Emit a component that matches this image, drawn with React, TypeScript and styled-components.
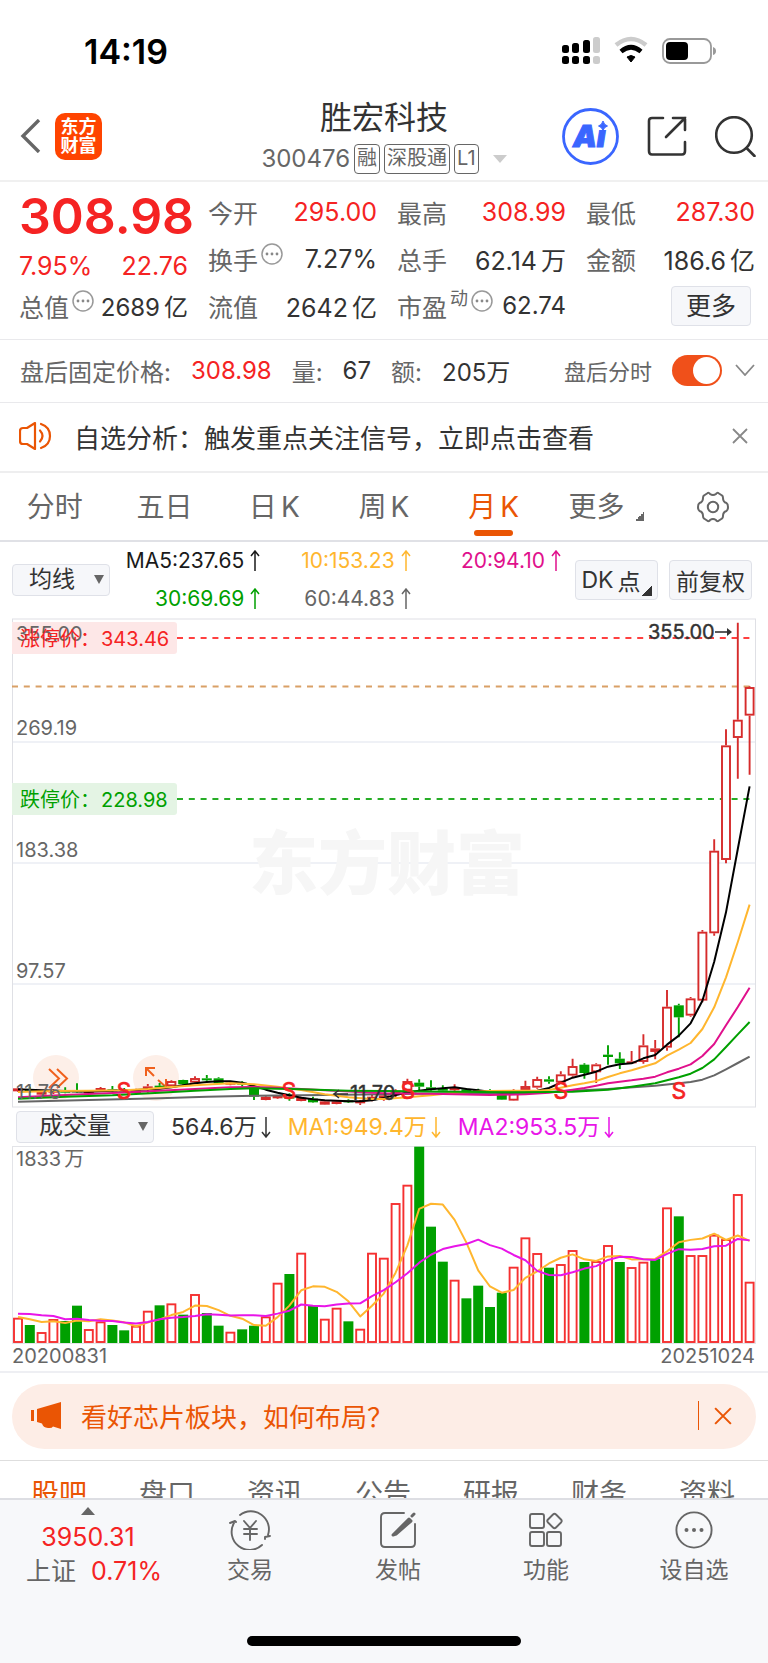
import React from "react";
import styled, { createGlobalStyle } from "styled-components";

const color = {
  ink: "#333333",
  grey: "#666666",
  rise: "#f52323",
  fall: "#00a000",
  accent: "#ea5504",
  amber: "#ffb62e",
  pink: "#e0108c",
  magenta: "#e815e8",
  line: "#e9e9ec",
  panel: "#f6f7fa",
};

const GlobalStyle = createGlobalStyle`
  * { box-sizing: border-box; }
  body { margin: 0; background: #fff; }
  body, button, select, input {
    font-family: Inter, "Noto Sans CJK SC", sans-serif;
    font-weight: 400;
    color: ${color.ink};
  }
  button { border: 0; padding: 0; background: none; cursor: pointer; }
  svg { display: block; flex: none; }
`;

/* ---------- page frame ---------- */

const Screen = styled.div`
  display: flex;
  flex-direction: column;
  min-height: 100vh;
  overflow: hidden;
`;

const StatusBar = styled.div`
  display: flex;
  justify-content: space-between;
  align-items: center;
  height: 92px;
  padding: 10px 52px 0 84px;
  font-size: 34px;
  font-weight: 600;
  color: #000;
`;

const Header = styled.header`
  display: grid;
  grid-template-columns: 1fr auto 1fr;
  align-items: center;
  height: 90px;
  padding: 0 12px;
  border-bottom: 2px solid #f0f0f0;
`;

const HeaderSide = styled.div<{ $end?: boolean }>`
  display: flex;
  align-items: center;
  justify-content: ${(p) => (p.$end ? "flex-end" : "flex-start")};
  gap: ${(p) => (p.$end ? 28 : 14)}px;
  padding-left: ${(p) => (p.$end ? 0 : 8)}px;
`;

const AppLogo = styled.a`
  display: flex;
  align-items: center;
  justify-content: center;
  width: 47px;
  height: 47px;
  border-radius: 10px;
  background: #ff4400;
  color: #fff;
  font-size: 18px;
  font-weight: 700;
  line-height: 19px;
  text-align: center;
  text-decoration: none;
`;

const StockTitle = styled.div`
  display: flex;
  flex-direction: column;
  align-items: center;
`;

const StockName = styled.h1`
  margin: 0;
  font-size: 32px;
  font-weight: 400;
  line-height: 40px;
`;

const StockCode = styled.div`
  display: flex;
  align-items: center;
  gap: 4px;
  font-size: 24px;
  line-height: 30px;
  color: ${color.grey};
  margin-top: 6px;
`;

const Badge = styled.span`
  height: 30px;
  padding: 0 2px;
  border: 1px solid ${color.grey};
  border-radius: 4px;
  font-size: 20px;
  line-height: 27px;
`;

/* ---------- quote ---------- */

const Quote = styled.section`
  display: grid;
  grid-template-columns: repeat(4, minmax(0, 1fr));
  column-gap: 20px;
  padding: 6px 13px 10px 19px;
  border-bottom: 1px solid ${color.line};
`;

const QuoteColumn = styled.div`
  display: flex;
  flex-direction: column;
`;

const LastPrice = styled.div`
  height: 56px;
  font-size: 50px;
  line-height: 56px;
  font-weight: 600;
  color: ${color.rise};
`;

const Change = styled.div`
  display: flex;
  justify-content: space-between;
  height: 38px;
  padding-top: 6px;
  font-size: 25px;
  line-height: 32px;
  color: ${color.rise};
`;

const Metric = styled.div`
  display: flex;
  justify-content: space-between;
  align-items: center;
  height: 47px;
  font-size: 25px;
  white-space: nowrap;
`;

const MetricLabel = styled.span`
  display: flex;
  align-items: center;
  gap: 3px;
  color: ${color.grey};
`;

const SuperText = styled.sup`
  font-size: 18px;
  line-height: 20px;
  padding-bottom: 14px;
`;

const HintMark = styled.span`
  padding-bottom: 10px;
`;

const MetricValue = styled.span<{ $rise?: boolean; $compact?: boolean }>`
  font-size: ${(p) => (p.$compact ? 24 : 25)}px;
  color: ${(p) => (p.$rise ? color.rise : color.ink)};
`;

const Unit = styled.span`
  margin-left: 4px;
`;

const MoreButton = styled.button`
  width: 80px;
  height: 40px;
  margin: 0 4px 0 auto;
  border: 1px solid #dfe1e8;
  border-radius: 4px;
  background: ${color.panel};
  font-size: 25px;
  line-height: 36px;
`;

/* ---------- after-hours and notice ---------- */

const AfterHours = styled.section`
  display: flex;
  align-items: center;
  height: 63px;
  padding: 0 13px 2px 20px;
  border-bottom: 1px solid ${color.line};
  font-size: 24px;
  color: ${color.grey};
  white-space: nowrap;
`;

const AfterValue = styled.span<{ $rise?: boolean }>`
  margin: 0 20px;
  color: ${(p) => (p.$rise ? color.rise : color.ink)};
`;

const AfterToggle = styled.label`
  display: flex;
  align-items: center;
  gap: 20px;
  margin-left: auto;
  margin-right: 13px;
  font-size: 22px;
`;

const Switch = styled.input`
  appearance: none;
  width: 50px;
  height: 31px;
  margin: 0;
  border-radius: 16px;
  background: #f0501a;
  &::before {
    content: "";
    display: block;
    width: 27px;
    height: 27px;
    margin: 2px 2px 2px 21px;
    border-radius: 50%;
    background: #fff;
  }
`;

const Notice = styled.section`
  display: flex;
  align-items: center;
  height: 70px;
  padding: 0 20px 2px 19px;
  border-bottom: 2px solid #eeeeef;
  font-size: 26px;
`;

const NoticeText = styled.a`
  flex: 1;
  margin-left: 22px;
  color: ${color.ink};
  text-decoration: none;
  white-space: nowrap;
`;

/* ---------- period tabs ---------- */

const PeriodTabs = styled.nav`
  display: grid;
  grid-template-columns: repeat(7, 1fr);
  height: 69px;
  border-bottom: 2px solid #e0e1e6;
`;

const PeriodTab = styled.button<{ $active?: boolean }>`
  display: flex;
  flex-direction: column;
  align-items: center;
  justify-content: flex-end;
  font-size: 28px;
  line-height: 44px;
  color: ${(p) => (p.$active ? color.accent : color.grey)};
  &::after {
    content: "";
    width: 39px;
    height: 6px;
    margin: 1px 0 4px;
    border-radius: 3px;
    background: ${(p) => (p.$active ? color.accent : "transparent")};
  }
`;

const TabLabel = styled.span`
  display: flex;
  align-items: center;
  gap: 4px;
  height: 44px;
`;

const Corner = styled.i<{ $size: number }>`
  width: ${(p) => p.$size}px;
  height: ${(p) => p.$size}px;
  background: linear-gradient(135deg, transparent 50%, currentColor 50%);
`;

const MenuLabel = styled(TabLabel)`
  padding-left: 6px;
`;

const TabCorner = styled(Corner)`
  align-self: flex-end;
  margin: 0 0 8px 7px;
`;

/* ---------- indicators ---------- */

const IndicatorRow = styled.div`
  display: flex;
  align-items: center;
  height: 76px;
  padding: 0 16px 0 12px;
`;

const SelectBox = styled.div<{ $wide?: boolean }>`
  position: relative;
  width: ${(p) => (p.$wide ? 138 : 98)}px;
  height: 32px;
  color: ${color.grey};
  svg {
    position: absolute;
    right: 6px;
    top: 11px;
    pointer-events: none;
  }
`;

const Select = styled.select<{ $large?: boolean }>`
  appearance: none;
  width: 100%;
  height: 100%;
  padding: 0 0 2px ${(p) => (p.$large ? 22 : 16)}px;
  border: 1px solid #dfe1e8;
  border-radius: 4px;
  background: ${color.panel};
  font-size: ${(p) => (p.$large ? 24 : 23)}px;
  line-height: 28px;
`;

const Legend = styled.div`
  flex: 1;
  display: grid;
  grid-template-columns: repeat(3, 1fr);
  row-gap: 8px;
`;

const Average = styled.span<{ $color: string }>`
  display: flex;
  align-items: center;
  justify-content: flex-end;
  gap: 6px;
  font-size: 21px;
  line-height: 30px;
  color: ${(p) => p.$color};
  white-space: nowrap;
`;

const OptionButton = styled.button<{ $first?: boolean }>`
  display: flex;
  align-items: center;
  justify-content: center;
  width: 83px;
  height: 40px;
  margin-left: ${(p) => (p.$first ? 14 : 11)}px;
  border: 1px solid #dfe1e8;
  border-radius: 4px;
  background: ${color.panel};
  font-size: 23px;
  white-space: nowrap;
`;

const OptionCorner = styled(Corner)`
  align-self: flex-end;
  margin-bottom: 3px;
`;

/* ---------- charts ---------- */

const ChartArea = styled.section`
  padding: 0 12px;
  svg.plot {
    width: 100%;
    height: auto;
  }
`;

const VolumeRow = styled.div`
  display: flex;
  align-items: center;
  gap: 17px;
  height: 38px;
  padding-left: 4px;
`;

const VolumeText = styled.span<{ $color: string }>`
  display: flex;
  align-items: center;
  gap: 4px;
  font-size: 23px;
  line-height: 30px;
  color: ${(p) => p.$color};
  white-space: nowrap;
`;

const Dates = styled.div`
  display: flex;
  justify-content: space-between;
  padding: 0 13px 2px 12px;
  border-bottom: 2px solid #eeeff3;
  font-size: 20px;
  line-height: 25px;
  color: ${color.grey};
`;

/* ---------- banner, content tabs, bottom bar ---------- */

const Banner = styled.aside`
  display: flex;
  align-items: center;
  height: 65px;
  margin: 11px 12px;
  padding: 0 24px 2px 19px;
  border-radius: 33px;
  background: #fdede6;
  font-size: 26px;
`;

const BannerLink = styled.a`
  flex: 1;
  margin-left: 19px;
  color: ${color.accent};
  text-decoration: none;
`;

const BannerClose = styled.button`
  display: flex;
  align-items: center;
  height: 29px;
  padding-left: 15px;
  border-left: 1px solid ${color.accent};
  color: ${color.accent};
`;

const ContentTabs = styled.nav`
  display: grid;
  grid-template-columns: repeat(7, 1fr);
  height: 38px;
  padding: 12px 7px 0 5px;
  border-top: 1px solid #dedede;
  overflow: hidden;
`;

const ContentTab = styled.a<{ $active?: boolean }>`
  font-size: 28px;
  line-height: 42px;
  text-align: center;
  text-decoration: none;
  color: ${(p) => (p.$active ? color.accent : color.grey)};
`;

const BottomBar = styled.footer`
  flex: 1;
  display: flex;
  flex-direction: column;
  justify-content: space-between;
  align-items: center;
  min-height: 164px;
  padding-bottom: 17px;
  border-top: 2px solid #dddee3;
  background: #f7f8fa;
`;

const BottomItems = styled.div`
  width: 100%;
  display: grid;
  grid-template-columns: 176fr repeat(4, 148fr);
`;

const IndexSummary = styled.button`
  display: flex;
  flex-direction: column;
  align-items: center;
  padding-top: 7px;
  font-size: 25px;
  line-height: 34px;
  color: ${color.rise};
`;

const IndexValue = styled.span`
  margin-top: 5px;
`;

const IndexChange = styled.span`
  display: flex;
  gap: 15px;
  padding-left: 12px;
  span {
    color: ${color.grey};
  }
`;

const BottomItem = styled.button`
  display: flex;
  flex-direction: column;
  align-items: center;
  gap: 3px;
  padding-top: 10px;
  font-size: 23px;
  line-height: 34px;
  color: ${color.grey};
`;

const HomeIndicator = styled.div`
  width: 274px;
  height: 10px;
  border-radius: 5px;
  background: #000;
`;

/* ---------- small icons ---------- */

const Hint = () => (
  <HintMark>
    <svg width="22" height="22" viewBox="0 0 22 22" fill="none" stroke="#999" strokeWidth="1.5">
      <circle cx="11" cy="11" r="10" />
      <g fill="#888" stroke="none">
        <circle cx="6" cy="11" r="1.4" />
        <circle cx="11" cy="11" r="1.4" />
        <circle cx="16" cy="11" r="1.4" />
      </g>
    </svg>
  </HintMark>
);

const Cross = ({ size = 16, stroke = "#888" }: { size?: number; stroke?: string }) => (
  <svg width={size} height={size} viewBox="0 0 16 16" stroke={stroke} strokeWidth="1.8">
    <path d="M1 1 15 15M15 1 1 15" />
  </svg>
);

const Arrow = ({ down = false }: { down?: boolean }) => (
  <svg width="10" height="22" viewBox="0 0 10 22" fill="none" stroke="currentColor" strokeWidth="1.5">
    <path d={down ? "M5 1V21M1 16 5 21 9 16" : "M5 21V1M1 6 5 1 9 6"} />
  </svg>
);

const Caret = () => (
  <svg width="10" height="9" viewBox="0 0 10 9" fill="currentColor">
    <path d="M0 0H10L5 9Z" />
  </svg>
);

const StatusIcons = () => (
  <svg width="156" height="30" viewBox="0 0 156 30">
    <g fill="#000">
      <rect x="2" y="9" width="7" height="8" rx="2.5" />
      <rect x="12" y="7" width="7" height="10" rx="2.5" />
      <rect x="23" y="4" width="7" height="13" rx="2.5" />
      <rect x="2" y="20" width="7" height="8" rx="2.5" />
      <rect x="12" y="20" width="7" height="8" rx="2.5" />
      <rect x="23" y="20" width="7" height="8" rx="2.5" />
    </g>
    <g fill="#ccc">
      <rect x="33" y="1" width="7" height="16" rx="2.5" />
      <rect x="33" y="20" width="7" height="8" rx="2.5" />
    </g>
    <g fill="none" strokeWidth="4.6">
      <path d="M56 9Q71 -3 86 9" stroke="#ccc" />
      <path d="M61 15.500Q71 7 81 15.500" stroke="#000" />
    </g>
    <path d="M67 21Q71 18 75 21L71 26Z" fill="#000" stroke="#000" />
    <rect x="103" y="3" width="48" height="24" rx="7" fill="none" stroke="#999" strokeWidth="1.8" />
    <rect x="106" y="6" width="22" height="18" rx="4" fill="#000" />
    <path d="M153 11Q156 12 156 15T153 19Z" fill="#999" />
  </svg>
);

const AiIcon = () => (
  <svg width="57" height="57" viewBox="0 0 57 57">
    <circle cx="28.500" cy="28.500" r="27" fill="#fff" stroke="#3a66ff" strokeWidth="2.8" />
    <text x="11" y="39" fontSize="30" fontWeight="900" fontStyle="italic" fill="#3a66ff" stroke="#3a66ff">
      Ai
    </text>
    <path d="M34 12H48V22H34Z" fill="#fff" />
    <path d="M41 13Q42 17 45.500 18Q42 19 41 22.500Q40 19 36.500 18Q40 17 41 13Z" fill="#3a66ff" stroke="#3a66ff" />
  </svg>
);

const ShareIcon = () => (
  <svg width="40" height="41" viewBox="0 0 40 41" fill="none" stroke="#333" strokeWidth="2.6" strokeLinecap="round">
    <path d="M16 2H5Q2 2 2 5V35Q2 38.500 5 38.500H35Q38 38.500 38 35V26" />
    <path d="M26 2H38V14M38 2 19 21" />
  </svg>
);

const SearchIcon = () => (
  <svg width="41" height="41" viewBox="0 0 41 41" fill="none" stroke="#333" strokeWidth="2.6" strokeLinecap="round">
    <circle cx="19" cy="19" r="17.800" />
    <path d="M31.500 32 39.500 40" />
  </svg>
);

const SpeakerIcon = () => (
  <svg width="33" height="28" viewBox="0 0 33 28" fill="none" stroke={color.accent} strokeWidth="2.2" strokeLinecap="round" strokeLinejoin="round">
    <path d="M16 1V27L8 22H4Q1 22 1 19V9Q1 6 4 6H8Z" />
    <path d="M21 8.500Q26 14 21 19.500M22 2Q31 5 31 14T22 26" />
  </svg>
);

const GearIcon = () => (
  <svg width="32" height="32" viewBox="0 0 32 32" fill="none" stroke={color.grey} strokeWidth="2" strokeLinejoin="round">
    <path d="M10 2.500Q12 1 13 3Q16 5 19 3Q20 1 22 2.500L25 4.500Q26 5 26 7Q26 11 29.500 12Q31 13 31 16T29.500 20Q26 21 26 25Q26 27 25 27.500L22 29.500Q20 31 19 29Q16 27 13 29Q12 31 10 29.500L7 27.500Q6 27 6 25Q6 21 2.500 20Q1 19 1 16T2.500 12Q6 11 6 7Q6 5 7 4.500Z" />
    <circle cx="16" cy="16" r="5.200" />
  </svg>
);

const MegaphoneIcon = () => (
  <svg width="31" height="27" viewBox="0 0 31 27" fill={color.accent}>
    <path d="M0 8H3V19H0ZM6 7 30 0V27L22 24.500Q21 26.500 17 26Q12 25.500 11 21.500L6 20Z" />
  </svg>
);

const BottomIcon = ({ children }: { children: React.ReactNode }) => (
  <svg width="42" height="40" viewBox="0 0 42 40" fill="none" stroke={color.grey} strokeWidth="1.9" strokeLinecap="round" strokeLinejoin="round">
    {children}
  </svg>
);

/* ---------- chart data ---------- */

const LEFT = 6;
const STEP = 11.8;
const xAt = (i: number) => LEFT + i * STEP;

/* Bar volume; the largest one fills the plot. */
const volumes = [
  76, 54, 33, 72, 66, 112, 42, 65, 54, 38, 52, 97, 113, 119, 85, 147, 90, 52, 34, 41, 52,
  80, 181, 207, 271, 111, 73, 106, 65, 43, 271, 256, 420, 475, 589, 349, 244, 190, 134, 172, 108,
  151, 229, 317, 270, 226, 237, 279, 243, 246, 294, 243, 228, 244, 252, 407, 380, 264, 264, 325, 312,
  447, 184,
];

/* r: red and hollow, g: green and filled; ten bars to a group. */
const volumeKinds = [
  "rgrrggrrgg", "rrgrgrggrg", "grrgrgrrgr", "rrrrgggrgg", "ggrrrgrrgr", "rgrrgrgrrr", "rrr",
].join("");
const candleKinds = [
  "rgrrggrrgg", "rrgrgrggrg", "grrgrgrrgr", "rrrrgggrgg", "ggrrrgrrgr", "ggrrrrgrrr", "rrr",
].join("");

/* body top, body bottom, high, low */
const candles: number[][] = [
  [565, 574, 563, 576], [568, 574, 560, 578], [576, 584, 570, 586], [570, 578, 568, 582],
  [572, 578, 562, 580], [570, 577, 550, 578], [574, 580, 570, 582], [564, 572, 561, 576],
  [568, 573, 558, 576], [568, 574, 564, 578], [570, 579, 566, 580], [559, 570, 552, 578],
  [557, 563, 549, 566], [543, 559, 541, 561], [540, 553, 539, 557], [534, 548, 529, 551],
  [535, 541, 525, 544], [535, 550, 532, 552], [548, 553, 545, 556], [548, 554, 544, 560],
  [565, 590, 562, 600], [590, 600, 588, 601], [588, 595, 585, 597], [590, 595, 580, 602],
  [593, 603, 590, 604], [596, 607, 590, 608], [604, 614, 602, 615], [604, 612, 602, 613],
  [601, 606, 598, 608], [604, 610, 600, 615], [590, 600, 585, 604], [586, 596, 580, 602],
  [572, 580, 568, 592], [543, 572, 536, 576], [548, 560, 538, 573], [562, 568, 541, 572],
  [566, 572, 556, 576], [564, 571, 553, 576], [568, 574, 564, 577], [570, 576, 566, 578],
  [572, 578, 568, 582], [585, 599, 582, 600], [570, 602, 568, 603], [558, 570, 542, 572],
  [537, 563, 530, 566], [538, 545, 529, 551], [523, 548, 514, 552], [498, 527, 476, 530],
  [494, 519, 490, 536], [493, 517, 490, 549], [464, 471, 436, 494], [476, 490, 457, 507],
  [484, 490, 453, 492], [436, 486, 403, 491], [445, 456, 420, 478], [320, 443, 270, 452],
  [316, 352, 311, 412], [295, 347, 291, 350], [95, 302, 90, 307], [-148, 100, -182, 107],
  [-464, -120, -512, -110], [-541, -486, -832, -364], [-639, -553, -641, -376],
];

/* [bar index, level] along each average */
const averages: { stroke: string; points: number[][] }[] = [
  {
    stroke: "#666666",
    points: [[0, 605], [6, 600], [12, 595], [16, 590], [20, 587], [26, 585], [31, 583], [37, 580], [43, 580], [46, 574], [50, 567], [54, 557], [57, 546], [58, 539], [59, 526], [60, 508], [61, 489], [62, 470]],
  },
  {
    stroke: "#000000",
    points: [[0, 568], [2, 571], [4, 573], [6, 575], [8, 572], [10, 570], [12, 566], [13, 562], [14, 556], [15, 550], [16, 546], [17, 544], [18, 544], [19, 548], [20, 558], [21, 569], [22, 578], [23, 586], [24, 593], [25, 598], [26, 601], [28, 604], [29, 604], [30, 601], [31, 594], [33, 577], [35, 568], [36, 565], [37, 562], [38, 567], [39, 571], [40, 575], [41, 577], [43, 576], [44, 572], [45, 564], [46, 548], [47, 533], [48, 524], [49, 515], [50, 500], [51, 493], [52, 490], [53, 475], [54, 465], [55, 434], [56, 407], [57, 370], [58, 302], [59, 185], [60, 37], [61, -153], [62, -341]],
  },
  {
    stroke: color.amber,
    points: [[0, 576], [3, 573], [6, 572], [9, 571], [11, 567], [13, 561], [15, 556], [18, 550], [20, 553], [22, 560], [24, 570], [26, 583], [28, 592], [30, 597], [31, 597], [33, 592], [35, 586], [37, 578], [40, 573], [44, 572], [45, 570], [46, 563], [47, 556], [48, 550], [49, 543], [50, 531], [51, 520], [52, 511], [53, 500], [54, 490], [55, 467], [56, 449], [57, 429], [58, 387], [59, 322], [60, 232], [61, 126], [62, 14]],
  },
  {
    stroke: color.pink,
    points: [[0, 592], [4, 585], [8, 579], [12, 572], [15, 567], [18, 562], [20, 561], [22, 563], [24, 567], [26, 571], [31, 580], [35, 581], [37, 583], [40, 585], [43, 583], [45, 578], [46, 574], [47, 569], [48, 564], [49, 557], [50, 550], [51, 545], [52, 541], [53, 536], [54, 530], [55, 517], [56, 506], [57, 493], [58, 468], [59, 432], [60, 376], [61, 321], [62, 263]],
  },
  {
    stroke: color.fall,
    points: [[0, 596], [4, 590], [8, 586], [12, 578], [15, 572], [18, 567], [20, 565], [24, 568], [28, 572], [31, 573], [37, 575], [43, 577], [47, 575], [50, 569], [52, 560], [54, 550], [55, 541], [56, 532], [57, 521], [58, 504], [59, 478], [60, 441], [61, 403], [62, 366]],
  },
];

const levelY = (v: number) => 282 + v / 3;
const toPoints = (pts: number[][], y: (v: number) => number) =>
  pts.map(([i, v]) => `${xAt(i)},${y(v).toFixed(2)}`).join(" ");

const volumeY = (v: number) => 197 - v / 3;

/* Running mean; the leading values come from bars left of the plot. */
const meanLine = (span: number, lead: number[]) =>
  volumes.map((_, i) =>
    i < lead.length
      ? [i, lead[i]]
      : [i, volumes.slice(i - span + 1, i + 1).reduce((a, b) => a + b, 0) / span],
  );

const volumeShort = meanLine(5, [78, 71, 63, 65]);
const volumeLong = meanLine(10, [88, 87, 83, 81, 71, 73, 69, 67, 66]);

const Candle = ({ i }: { i: number }) => {
  const [top, bottom, high, low] = candles[i].map(levelY);
  const rising = candleKinds[i] === "r";
  const stroke = rising ? "#d62b2b" : color.fall;
  const x = xAt(i);
  const small = bottom - top < 3.6;
  return (
    <g stroke={stroke} strokeWidth="1.9">
      <path d={`M${x} ${high}V${top}M${x} ${bottom}V${low}`} />
      {rising && !small ? (
        <rect x={x - 4} y={top + 1} width="8" height={bottom - top - 2} fill="#fff" />
      ) : (
        <rect x={x - 5} y={top} width="10" height={Math.max(2, bottom - top)} fill={stroke} stroke="none" />
      )}
    </g>
  );
};

const SellMark = ({ x }: { x: number }) => (
  <text x={x} y="481" fontSize="23" fill={color.rise} stroke={color.rise} strokeWidth="0.6" textAnchor="middle">
    S
  </text>
);

const PriceChart = () => (
  <svg className="plot" viewBox="0 0 744 490" role="img" aria-label="月K">
    <path d="M0 124H744M0 245H744M0 366H744" stroke="#eff1f6" strokeWidth="2" />
    <rect x="0.500" y="1" width="743" height="488" fill="none" stroke="#dfe0e5" />
    <text x="237" y="271" fontSize="69" fontWeight="900" fill="#f6f6f6">
      东方财富
    </text>
    <g fill="none" strokeWidth="2.2" strokeDasharray="6 5.8">
      <path d="M165 20H739" stroke="#ff4040" />
      <path d="M0 68.500H739" stroke="#d9a066" />
      <path d="M165 181H739" stroke="#27ad27" />
    </g>
    <g fill="#fdefe8">
      <circle cx="44" cy="460" r="23" />
      <circle cx="144" cy="460" r="23" />
    </g>
    <g fill="none" stroke="#f0601c" strokeWidth="2">
      <path d="M37 451 47 460.500 37 470M45 451 55 460.500 45 470" />
      <path d="M142 458 134 450M134 458V450H143M146 462 154 469M154 461V469" />
    </g>
    <g fill={color.grey} fontSize="20">
      <text x="4" y="117">269.19</text>
      <text x="4" y="239">183.38</text>
      <text x="4" y="360">97.57</text>
    </g>
    {candles.map((_, i) => (
      <Candle key={i} i={i} />
    ))}
    <g fill="none" strokeWidth="2" strokeLinejoin="round">
      {averages.map((line) => (
        <polyline key={line.stroke} stroke={line.stroke} points={toPoints(line.points, levelY)} />
      ))}
    </g>
    <text x="4" y="481" fontSize="20" fill={color.grey}>11.76</text>
    <g fill={color.ink} stroke={color.ink} fontSize="20">
      <text x="338" y="482" strokeWidth="0.4">11.70</text>
      <path d="M336 476H322M327 472 322 476 327 480" fill="none" strokeWidth="1.6" />
      <text x="636" y="21" strokeWidth="0.4">355.00</text>
      <path d="M703 14H718" strokeWidth="1.6" />
      <path d="M715 10 720 14 715 18Z" stroke="none" />
    </g>
    {[112, 277, 396, 549, 667].map((x) => (
      <SellMark key={x} x={x} />
    ))}
    <path d="M0 4H162Q165 4 165 7V33Q165 36 162 36H0Z" fill="#fde7e7" />
    <path d="M0 165H162Q165 165 165 168V194Q165 197 162 197H0Z" fill="#e4f4e4" />
    <text x="4" y="23" fontSize="20" fill={color.grey}>355.00</text>
    <g fontSize="20" fill={color.rise}>
      <text x="8" y="28">涨停价：</text>
      <text x="89" y="28">343.46</text>
    </g>
    <g fontSize="20" fill={color.fall}>
      <text x="8" y="189">跌停价：</text>
      <text x="89" y="189">228.98</text>
    </g>
  </svg>
);

const VolumeChart = () => (
  <svg className="plot" viewBox="0 0 744 198" role="img" aria-label="成交量">
    <rect x="0.500" y="0.500" width="743" height="197" fill="none" stroke="#e3e4e8" />
    <text x="4" y="20" fontSize="20" fill={color.grey}>
      1833<tspan dx="3">万</tspan>
    </text>
    {volumes.map((v, i) =>
      volumeKinds[i] === "r" ? (
        <rect key={i} x={xAt(i) - 4} y={volumeY(v) + 1} width="8" height={v / 3 - 2} fill="#fff" stroke="#f53030" strokeWidth="1.9" />
      ) : (
        <rect key={i} x={xAt(i) - 5} y={volumeY(v)} width="10" height={v / 3} fill={color.fall} />
      ),
    )}
    <g fill="none" strokeWidth="2" strokeLinejoin="round">
      <polyline stroke={color.amber} points={toPoints(volumeShort, volumeY)} />
      <polyline stroke={color.magenta} points={toPoints(volumeLong, volumeY)} />
    </g>
  </svg>
);

/* ---------- page ---------- */

export default function App() {
  return (
    <>
      <GlobalStyle />
      <Screen>
        <StatusBar>
          <span>14:19</span>
          <StatusIcons />
        </StatusBar>

        <Header>
          <HeaderSide>
            <button aria-label="返回">
              <svg width="21" height="34" viewBox="0 0 21 34" fill="none" stroke={color.grey} strokeWidth="3.4">
                <path d="M19 1 3 17 19 33" />
              </svg>
            </button>
            <AppLogo href="#">
              东方
              <br />
              财富
            </AppLogo>
          </HeaderSide>
          <StockTitle>
            <StockName>胜宏科技</StockName>
            <StockCode>
              300476
              <Badge>融</Badge>
              <Badge>深股通</Badge>
              <Badge>L1</Badge>
              <button aria-label="切换股票">
                <svg width="24" height="8" viewBox="0 0 24 8" fill="#ccc">
                  <path d="M10 0H24L17 8Z" />
                </svg>
              </button>
            </StockCode>
          </StockTitle>
          <HeaderSide $end>
            <button aria-label="智能助手"><AiIcon /></button>
            <button aria-label="分享"><ShareIcon /></button>
            <button aria-label="搜索"><SearchIcon /></button>
          </HeaderSide>
        </Header>

        <Quote>
          <QuoteColumn>
            <LastPrice>308.98</LastPrice>
            <Change>
              <span>7.95%</span>
              <span>22.76</span>
            </Change>
            <Metric>
              <MetricLabel>总值<Hint /></MetricLabel>
              <MetricValue $compact>2689<Unit>亿</Unit></MetricValue>
            </Metric>
          </QuoteColumn>
          <QuoteColumn>
            <Metric>
              <MetricLabel>今开</MetricLabel>
              <MetricValue $rise>295.00</MetricValue>
            </Metric>
            <Metric>
              <MetricLabel>换手<Hint /></MetricLabel>
              <MetricValue>7.27%</MetricValue>
            </Metric>
            <Metric>
              <MetricLabel>流值</MetricLabel>
              <MetricValue>2642<Unit>亿</Unit></MetricValue>
            </Metric>
          </QuoteColumn>
          <QuoteColumn>
            <Metric>
              <MetricLabel>最高</MetricLabel>
              <MetricValue $rise>308.99</MetricValue>
            </Metric>
            <Metric>
              <MetricLabel>总手</MetricLabel>
              <MetricValue>62.14<Unit>万</Unit></MetricValue>
            </Metric>
            <Metric>
              <MetricLabel>市盈<SuperText>动</SuperText><Hint /></MetricLabel>
              <MetricValue $compact>62.74</MetricValue>
            </Metric>
          </QuoteColumn>
          <QuoteColumn>
            <Metric>
              <MetricLabel>最低</MetricLabel>
              <MetricValue $rise>287.30</MetricValue>
            </Metric>
            <Metric>
              <MetricLabel>金额</MetricLabel>
              <MetricValue>186.6<Unit>亿</Unit></MetricValue>
            </Metric>
            <Metric>
              <MoreButton>更多</MoreButton>
            </Metric>
          </QuoteColumn>
        </Quote>

        <AfterHours>
          盘后固定价格:
          <AfterValue $rise>308.98</AfterValue>
          量:
          <AfterValue>67</AfterValue>
          额:
          <AfterValue>205万</AfterValue>
          <AfterToggle>
            盘后分时
            <Switch type="checkbox" defaultChecked />
          </AfterToggle>
          <button aria-label="展开">
            <svg width="20" height="12" viewBox="0 0 20 12" fill="none" stroke="#888" strokeWidth="1.8">
              <path d="M1 1 10 11 19 1" />
            </svg>
          </button>
        </AfterHours>

        <Notice>
          <SpeakerIcon />
          <NoticeText href="#">自选分析：触发重点关注信号，立即点击查看</NoticeText>
          <button aria-label="关闭提示"><Cross /></button>
        </Notice>

        <PeriodTabs>
          <PeriodTab>分时</PeriodTab>
          <PeriodTab>五日</PeriodTab>
          <PeriodTab><TabLabel>日<span>K</span></TabLabel></PeriodTab>
          <PeriodTab><TabLabel>周<span>K</span></TabLabel></PeriodTab>
          <PeriodTab $active><TabLabel>月<span>K</span></TabLabel></PeriodTab>
          <PeriodTab><MenuLabel>更多<TabCorner $size={9} /></MenuLabel></PeriodTab>
          <PeriodTab aria-label="设置"><TabLabel><GearIcon /></TabLabel></PeriodTab>
        </PeriodTabs>

        <IndicatorRow>
          <SelectBox>
            <Select aria-label="主图指标"><option>均线</option></Select>
            <Caret />
          </SelectBox>
          <Legend>
            <Average $color="#1a1a1a">MA5:237.65<Arrow /></Average>
            <Average $color={color.amber}>10:153.23<Arrow /></Average>
            <Average $color={color.pink}>20:94.10<Arrow /></Average>
            <Average $color={color.fall}>30:69.69<Arrow /></Average>
            <Average $color={color.grey}>60:44.83<Arrow /></Average>
          </Legend>
          <OptionButton $first>DK<Unit>点</Unit><OptionCorner $size={11} /></OptionButton>
          <OptionButton>前复权</OptionButton>
        </IndicatorRow>

        <ChartArea>
          <PriceChart />
          <VolumeRow>
            <SelectBox $wide>
              <Select $large aria-label="副图指标"><option>成交量</option></Select>
              <Caret />
            </SelectBox>
            <VolumeText $color={color.ink}>564.6万<Arrow down /></VolumeText>
            <VolumeText $color={color.amber}>MA1:949.4万<Arrow down /></VolumeText>
            <VolumeText $color={color.magenta}>MA2:953.5万<Arrow down /></VolumeText>
          </VolumeRow>
          <VolumeChart />
        </ChartArea>
        <Dates>
          <span>20200831</span>
          <span>20251024</span>
        </Dates>

        <Banner>
          <MegaphoneIcon />
          <BannerLink href="#">看好芯片板块，如何布局？</BannerLink>
          <BannerClose aria-label="关闭"><Cross size={18} stroke={color.accent} /></BannerClose>
        </Banner>

        <ContentTabs>
          <ContentTab href="#" $active>股吧</ContentTab>
          {["盘口", "资讯", "公告", "研报", "财务", "资料"].map((t) => (
            <ContentTab key={t} href="#">{t}</ContentTab>
          ))}
        </ContentTabs>

        <BottomBar>
          <BottomItems>
            <IndexSummary>
              <svg width="14" height="8" viewBox="0 0 14 8" fill={color.grey}>
                <path d="M0 8 7 0 14 8Z" />
              </svg>
              <IndexValue>3950.31</IndexValue>
              <IndexChange><span>上证</span>0.71%</IndexChange>
            </IndexSummary>
            <BottomItem>
              <BottomIcon>
                <path d="M11 5A18 18 0 0 1 39 25M36 29 36 27 41 26M33 35A18 18 0 0 1 5 13M1 13 6 11 7 12" />
                <path d="M15 11 21 18 27 11M15 19H28M15 24H28M21 18V30" />
              </BottomIcon>
              交易
            </BottomItem>
            <BottomItem>
              <BottomIcon>
                <path d="M27 3H8Q4 3 4 7V33Q4 37 8 37H34Q38 37 38 33V14" />
                <path d="M16 25 32 9 34 11 19 24ZM35 6 37 4" strokeWidth="3" />
              </BottomIcon>
              发帖
            </BottomItem>
            <BottomItem>
              <BottomIcon>
                <rect x="5" y="4" width="14" height="14" rx="2" />
                <rect x="5" y="22" width="14" height="14" rx="2" />
                <rect x="22" y="22" width="14" height="14" rx="2" />
                <path d="M28 4.500Q29.500 3 31 4.500L36 9.500Q37.500 11 36 12.500L31 17.500Q29.500 19 28 17.500L23 12.500Q21.500 11 23 9.500Z" />
              </BottomIcon>
              功能
            </BottomItem>
            <BottomItem>
              <BottomIcon>
                <circle cx="21" cy="20" r="17.600" />
                <g fill={color.grey} stroke="none">
                  <circle cx="13.500" cy="20" r="2" />
                  <circle cx="21" cy="20" r="2" />
                  <circle cx="28.500" cy="20" r="2" />
                </g>
              </BottomIcon>
              设自选
            </BottomItem>
          </BottomItems>
          <HomeIndicator />
        </BottomBar>
      </Screen>
    </>
  );
}
